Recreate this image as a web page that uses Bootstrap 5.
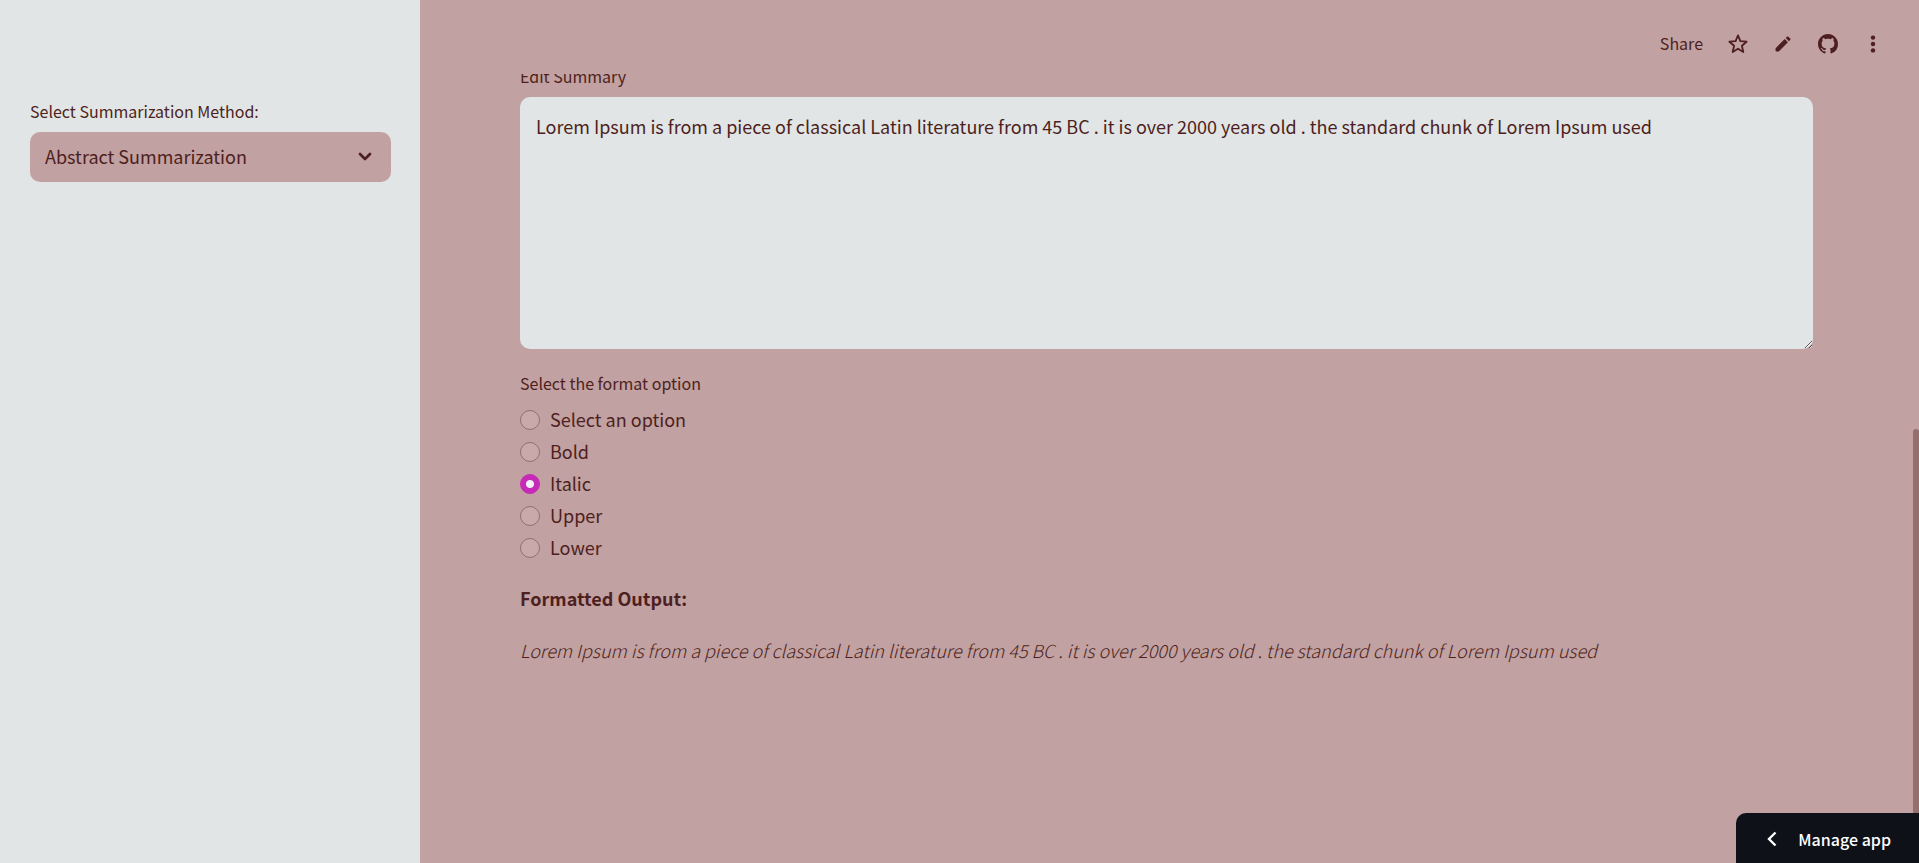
<!DOCTYPE html>
<html lang="en">
<head>
<meta charset="utf-8">
<meta name="viewport" content="width=device-width, initial-scale=1">
<title>Text Summarization</title>
<link href="https://cdn.jsdelivr.net/npm/bootstrap@5.3.0/dist/css/bootstrap.min.css" rel="stylesheet">
<style>
  :root { --rose: #c1a1a1; --mist: #e1e5e5; --ink: #4e1f20; --pick: #c62bb7; }
  body {
    font-family: "Source Sans Pro", "Noto Sans CJK SC", "Noto Sans", sans-serif;
    font-size: 18px; line-height: 28px;
    color: var(--ink); background: var(--rose);
  }
  .side-pane { width: 420px; padding: 97px 29px 0 30px; background: var(--mist); }
  .field-name { display: block; float: none; width: auto; margin: 0 0 7px; font-size: 16px; line-height: 28px; color: var(--ink); }
  .method-select {
    height: 50px; padding: 0 48px 2px 15px; font-size: 18px; line-height: 28px;
    color: var(--ink); background-color: var(--rose);
    border: 0; border-radius: 10px;
    background-image: url("data:image/svg+xml,%3Csvg xmlns='http://www.w3.org/2000/svg' viewBox='0 0 14 10'%3E%3Cpath d='M2 2l5 5 5-5' fill='none' stroke='%234e1f20' stroke-width='2.7' stroke-linecap='round' stroke-linejoin='round'/%3E%3C/svg%3E");
    background-size: 14px 10px; background-position: right 19px center;
  }
  .top-bar { height: 74px; padding: 14px 18px 0 0; }
  .tool-btn { width: 45px; height: 40px; color: var(--ink); border: 0; }
  .share-btn { height: 40px; color: var(--ink); font-size: 16px; line-height: 28px; padding: 0 12px 2px; border: 0; }
  .scroll-view { padding: 0 100px; overflow: hidden; }
  .scrolled { margin-top: -12px; margin-bottom: 20px; }
  .summary-box {
    height: 252px; padding: 15px 16px; font-size: 18px; line-height: 28px;
    color: var(--ink); background: var(--mist); border: 0; border-radius: 10px; resize: both;
  }
  .summary-box:focus { color: var(--ink); background: var(--mist); }
  .format-set { margin-bottom: 20px; }
  .choice { min-height: 32px; padding: 0; margin: 0; gap: 10px; }
  .choice .form-check-input {
    float: none; width: 20px; height: 20px; margin: 0;
    background-color: #c7aaa9; border: 1px solid #966f6e;
  }
  .choice .form-check-input:checked {
    background-color: var(--pick); border-color: var(--pick);
    background-image: radial-gradient(circle, #f0f2f6 0 3.5px, transparent 4.5px);
  }
  .choice label { line-height: 28px; padding-bottom: 2px; }
  .rail { width: 6px; }
  .rail-thumb { height: 50.3%; background: #946f6e; border-radius: 3px 3px 0 0; }
  .manage-btn {
    height: 50px; padding: 2px 28px 0 30px; gap: 20px; color: #fff; background: #0e1117;
    font-size: 16px; font-weight: 500; border: 0; border-radius: 10px 0 0 0;
  }
  .manage-btn:hover { color: #fff; background: #0e1117; }
</style>
</head>
<body>
<div class="d-flex vh-100 overflow-hidden">
  <aside class="side-pane flex-shrink-0">
    <label class="field-name" for="method">Select Summarization Method:</label>
    <select class="form-select method-select" id="method">
      <option>Abstract Summarization</option>
      <option>Extractive Summarization</option>
    </select>
  </aside>

  <div class="d-flex flex-column flex-grow-1">
    <header class="top-bar d-flex justify-content-end align-items-center flex-shrink-0">
      <button type="button" class="btn share-btn">Share</button>
      <button type="button" class="btn tool-btn d-flex align-items-center justify-content-center p-0" aria-label="Favorite">
        <svg width="22" height="22" viewBox="0 0 22 22" fill="none" stroke="currentColor" stroke-width="1.8" stroke-linejoin="round"><path d="M11 2.400l2.400 5.800 6.200.5-4.700 4.100 1.400 6.200-5.300-3.300L5.700 19l1.400-6.200L2.400 8.700l6.200-.5z"/></svg>
      </button>
      <button type="button" class="btn tool-btn d-flex align-items-center justify-content-center p-0" aria-label="Edit source">
        <svg width="16" height="16" viewBox="0 0 16 16" fill="currentColor"><path d="M.6 12.200 9.700 3.100l3.200 3.200-9.100 9.100H1.300a.8.8 0 0 1-.8-.8zM10.700 2.100l1.300-1.300c.4-.4 1-.4 1.400 0l1.800 1.800c.4.4.4 1 0 1.400l-1.300 1.300z"/></svg>
      </button>
      <button type="button" class="btn tool-btn d-flex align-items-center justify-content-center p-0" aria-label="View on GitHub">
        <svg width="20" height="20" viewBox="0 0 16 16" fill="currentColor"><path d="M8 0C3.580 0 0 3.580 0 8c0 3.540 2.290 6.530 5.470 7.590.4.070.55-.17.55-.38 0-.19-.01-.82-.01-1.490-2.010.37-2.530-.49-2.690-.94-.09-.23-.48-.94-.82-1.130-.28-.15-.68-.52-.01-.53.63-.01 1.080.58 1.230.82.72 1.210 1.870.87 2.330.66.070-.52.28-.87.51-1.070-1.780-.2-3.640-.89-3.640-3.950 0-.87.31-1.590.82-2.150-.08-.2-.36-1.020.080-2.120 0 0 .67-.21 2.200.82.64-.18 1.320-.27 2-.27s1.360.09 2 .27c1.530-1.040 2.200-.82 2.200-.82.44 1.100.16 1.920.080 2.120.51.56.82 1.270.82 2.150 0 3.070-1.870 3.750-3.650 3.950.29.25.54.73.54 1.480 0 1.070-.01 1.930-.01 2.200 0 .21.15.46.55.38A8.010 8.010 0 0 0 16 8c0-4.420-3.580-8-8-8z"/></svg>
      </button>
      <button type="button" class="btn tool-btn d-flex align-items-center justify-content-center p-0" aria-label="Main menu">
        <svg width="6" height="18" viewBox="0 0 6 18" fill="currentColor"><circle cx="3" cy="2.600" r="2.200"/><circle cx="3" cy="9" r="2.200"/><circle cx="3" cy="15.400" r="2.200"/></svg>
      </button>
    </header>

    <main class="scroll-view flex-grow-1">
      <div class="scrolled">
        <label class="field-name" for="summary">Edit Summary</label>
        <textarea class="form-control summary-box d-block" id="summary" spellcheck="false">Lorem Ipsum is from a piece of classical Latin literature from 45 BC . it is over 2000 years old . the standard chunk of Lorem Ipsum used</textarea>
      </div>
      <fieldset class="format-set">
        <legend class="field-name">Select the format option</legend>
        <div class="form-check choice d-flex align-items-center"><input class="form-check-input" type="radio" name="fmt" id="f0"><label for="f0">Select an option</label></div>
        <div class="form-check choice d-flex align-items-center"><input class="form-check-input" type="radio" name="fmt" id="f1"><label for="f1">Bold</label></div>
        <div class="form-check choice d-flex align-items-center"><input class="form-check-input" type="radio" name="fmt" id="f2" checked><label for="f2">Italic</label></div>
        <div class="form-check choice d-flex align-items-center"><input class="form-check-input" type="radio" name="fmt" id="f3"><label for="f3">Upper</label></div>
        <div class="form-check choice d-flex align-items-center"><input class="form-check-input" type="radio" name="fmt" id="f4"><label for="f4">Lower</label></div>
      </fieldset>
      <p class="mb-4 fw-semibold">Formatted Output:</p>
      <p class="mb-0 fw-light"><em>Lorem Ipsum is from a piece of classical Latin literature from 45 BC . it is over 2000 years old . the standard chunk of Lorem Ipsum used</em></p>
    </main>
  </div>

  <div class="rail d-flex flex-column justify-content-end flex-shrink-0"><div class="rail-thumb"></div></div>
</div>

<button type="button" class="btn manage-btn position-fixed bottom-0 end-0 d-flex align-items-center">
  <svg width="12" height="16" viewBox="0 0 12 16" fill="none" stroke="currentColor" stroke-width="2.400"><path d="M9.500 1.500 3 8l6.500 6.500"/></svg>
  Manage app
</button>
<script src="https://cdn.jsdelivr.net/npm/bootstrap@5.3.0/dist/js/bootstrap.bundle.min.js"></script>
</body>
</html>
